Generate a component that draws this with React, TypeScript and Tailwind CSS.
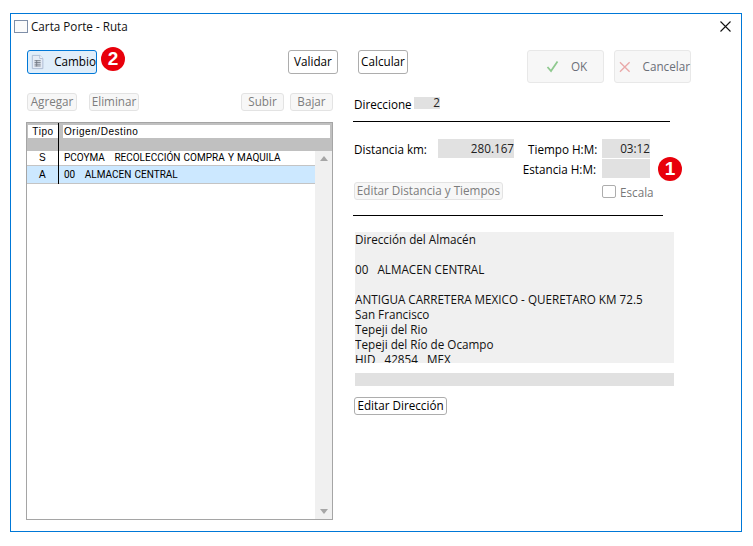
const ui = "font-['Open_Sans','Noto_Sans',sans-serif]"

function Btn({ label, className = '', disabled = false }: { label: string; className?: string; disabled?: boolean }) {
  return (
    <button
      className={`flex items-center justify-center whitespace-nowrap rounded-[3px] border text-[11.7px] leading-none ${
        disabled ? 'border-[#e3e3e3] bg-[#f7f7f7] text-[#7d7d7d]' : 'border-[#adadad] bg-white text-black'
      } ${className}`}
    >
      {label}
    </button>
  )
}

function Badge({ n, className = '' }: { n: string; className?: string }) {
  return (
    <div className={`flex h-6 w-6 shrink-0 items-center justify-center rounded-full bg-[#e8000b] font-['Liberation_Sans',sans-serif] text-[19px] font-bold text-white ${className}`}>
      {n}
    </div>
  )
}

function Field({ value = '', className = '' }: { value?: string; className?: string }) {
  return <div className={`flex items-center justify-end bg-[#e1e1e1] text-[11.7px] leading-none text-[#222] ${className}`}>{value}</div>
}

function Row({ tipo, text, h, selected = false }: { tipo: string; text: string; h: string; selected?: boolean }) {
  return (
    <div className={`flex items-center border-b border-[#c4c4c4] ${h} ${selected ? 'bg-[#cce8ff]' : 'bg-white'}`}>
      <div className="w-[31px] text-center">{tipo}</div>
      <div className="ml-[6px] whitespace-pre font-['Roboto',sans-serif] text-[10px] tracking-[0px] [word-spacing:0.7px]">{text}</div>
    </div>
  )
}

export default function App() {
  return (
    <div className={`h-[546px] w-[753px] overflow-hidden bg-white pl-[10px] pt-[13px] ${ui}`}>
      <div className="h-[519px] w-[732px] border border-[#0078d7] bg-white">
        {/* barra de titulo */}
        <div className="flex h-[24px] items-center pl-[3px] pr-[9px] pt-[1px]">
          <div className="h-[13px] w-[14px] border border-[#7f8fa8] bg-[#fbfbfb]" />
          <span className="ml-[3px] text-[11.7px] text-[#111]">Carta Porte - Ruta</span>
          <svg className="ml-auto" width="13" height="13" viewBox="0 0 13 13" fill="none" stroke="#111" strokeWidth="1.1">
            <path d="M1.5 1.5 L11.5 11.5 M11.5 1.5 L1.5 11.5" />
          </svg>
        </div>

        {/* botones superiores */}
        <div className="mt-[12px] flex h-[33px] items-start pl-[16px]">
          <button className="flex h-[24px] w-[70px] items-center rounded-[3px] border border-[#0078d7] bg-[#e0eefa] text-[11.7px] text-black">
            <svg className="ml-[3px]" width="15" height="16" viewBox="0 0 15 16">
              <path d="M1.5 0.5 H10 L13.5 4 V15.5 H1.5 Z" fill="#e4ebf5" stroke="#a9b8d0" />
              <path d="M10 0.5 V4 H13.5" fill="#fff" stroke="#a9b8d0" />
              <path d="M4 6.5 H11 M4 8.5 H11 M4 10.5 H11 M4 12.5 H11 M6.5 6 V13" stroke="#6f7680" strokeWidth="1" />
            </svg>
            <span className="ml-[10px]">Cambio</span>
          </button>
          <Badge n="2" className="ml-[4px] mt-[-3px]" />
          <Btn label="Validar" className="ml-[163px] h-[24px] w-[50px]" />
          <Btn label="Calcular" className="ml-[20px] h-[24px] w-[50px]" />
          <button className="ml-[119px] flex h-[33px] w-[77px] items-center rounded-[3px] border border-[#e8e8e8] bg-[#f7f7f7] text-[11.7px] text-[#6b6f78]">
            <svg className="ml-[18px]" width="13" height="13" viewBox="0 0 13 13" fill="none" stroke="#8fc98f" strokeWidth="1.8">
              <path d="M1.5 7 L5 11 L11.5 1.5" />
            </svg>
            <span className="ml-[12px]">OK</span>
          </button>
          <button className="ml-[10px] flex h-[33px] w-[77px] items-center rounded-[3px] border border-[#e8e8e8] bg-[#f7f7f7] text-[11.7px] text-[#6b6f78]">
            <svg className="ml-[4px]" width="12" height="12" viewBox="0 0 12 12" fill="none" stroke="#eaa9a9" strokeWidth="1.4">
              <path d="M1 1 L11 11 M11 1 L1 11" />
            </svg>
            <span className="ml-[12px]">Cancelar</span>
          </button>
        </div>

        <div className="mt-[10px] flex items-start">
          {/* columna izquierda */}
          <div className="ml-[15px] w-[308px]">
            <div className="flex items-center pl-[1px]">
              <Btn disabled label="Agregar" className="h-[18px] w-[50px]" />
              <Btn disabled label="Eliminar" className="ml-[12px] h-[18px] w-[50px]" />
              <Btn disabled label="Subir" className="ml-[102px] h-[18px] w-[43px]" />
              <Btn disabled label="Bajar" className="ml-[6px] h-[18px] w-[43px]" />
            </div>

            <div className="relative mt-[11px] flex h-[398px] w-[307px] flex-col overflow-hidden border border-[#a5a5a5] bg-white font-['Liberation_Sans',sans-serif] text-[10px] tracking-[0.55px] text-black">
              <div className="h-[28px] shrink-0 bg-[#c0c0c0] pt-[2px]">
                <div className="flex h-[13px] items-center">
                  <div className="ml-[1px] flex h-full w-[30px] items-center justify-center bg-white">Tipo</div>
                  <div className="ml-[5px] flex h-full w-[267px] items-center bg-white pl-[1px]">Origen/Destino</div>
                </div>
              </div>
              <div className="flex min-h-0 flex-1">
                <div className="flex-1">
                  <Row h="h-[15px] pb-px" tipo="S" text="PCOYMA   RECOLECCIÓN COMPRA Y MAQUILA" />
                  <Row h="h-[18px]" tipo="A" text="00   ALMACEN CENTRAL" selected />
                </div>
                <div className="flex w-[17px] flex-col items-center justify-between bg-[#f0f0f0] py-[5px]">
                  <div className="h-0 w-0 border-x-[4px] border-b-[5px] border-x-transparent border-b-[#a6a6a6]" />
                  <div className="h-0 w-0 border-x-[4px] border-t-[5px] border-x-transparent border-t-[#a6a6a6]" />
                </div>
              </div>
              {/* separador de columnas */}
              <div className="absolute left-[31px] top-0 h-[61px] w-px bg-black" />
            </div>
          </div>

          {/* columna derecha */}
          <div className="ml-[19px] mt-[3px] w-[340px] text-[11.7px] text-black">
            <div className="flex h-[13px] items-center pl-[1px]">
              <span className="w-[60px] translate-y-[2px]">Direccione</span>
              <Field value="2" className="h-[12px] w-[26px]" />
            </div>
            <div className="mt-[12px] h-px w-[317px] bg-black" />

            <div className="mt-[17px] flex pl-[1px]">
              <div className="flex w-[248px] flex-col">
                <div className="flex h-[19px] items-center">
                  <span className="w-[84px] translate-y-[1px]">Distancia km:</span>
                  <Field value="280.167" className="h-[19px] w-[76px]" />
                  <span className="ml-[14px] translate-y-[1px]">Tiempo H:M:</span>
                </div>
                <div className="flex h-[20px] items-center justify-end pr-[6px]">
                  <span className="pt-[4px]">Estancia H:M:</span>
                </div>
              </div>
              <div className="flex flex-col gap-px">
                <Field value="03:12" className="h-[19px] w-[48px]" />
                <Field className="h-[19px] w-[48px]" />
              </div>
              <Badge n="1" className="ml-[8px] mt-[18px]" />
            </div>

            <div className="mt-0 flex items-center pl-[1px]">
              <Btn disabled label="Editar Distancia y Tiempos" className="h-[18px] w-[149px]" />
              <div className="ml-[99px] h-[13px] w-[14px] rounded-[2px] border border-[#adadad] bg-white" />
              <span className="ml-[4px] mt-[3px] text-[#777]">Escala</span>
            </div>

            <div className="mt-[13px] h-px w-[310px] bg-black" />

            <div className="ml-[2px] mt-[16px] h-[131px] w-[319px] overflow-hidden whitespace-pre bg-[#f0f0f0] text-[11.7px] leading-[15px] text-[#111]">
              {'Dirección del Almacén\n\n00   ALMACEN CENTRAL\n\nANTIGUA CARRETERA MEXICO - QUERETARO KM 72.5\nSan Francisco\nTepeji del Rio\nTepeji del Río de Ocampo\nHID   42854   MEX'}
            </div>
            <div className="ml-[2px] mt-[10px] h-[13px] w-[319px] bg-[#e1e1e1]" />
            <Btn label="Editar Dirección" className="ml-[1px] mt-[11px] h-[18px] w-[93px]" />
          </div>
        </div>
      </div>
    </div>
  )
}
